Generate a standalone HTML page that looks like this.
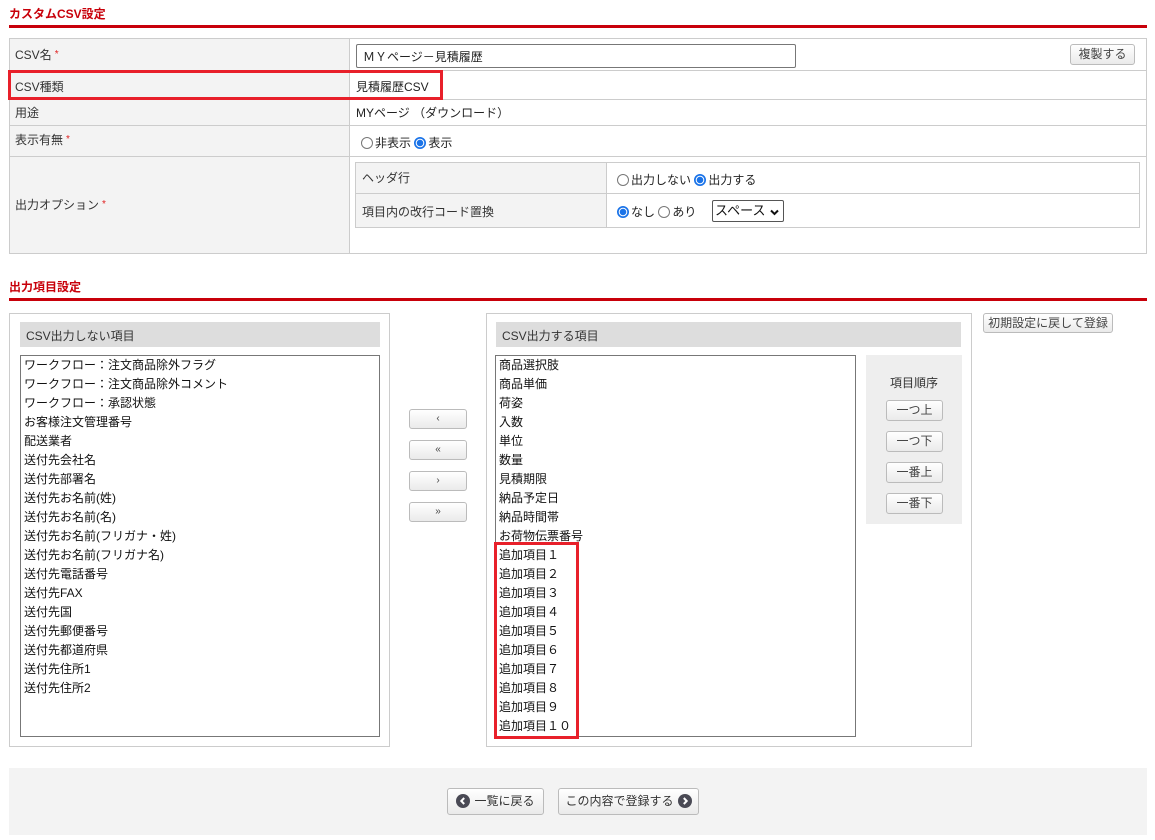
<!DOCTYPE html>
<html><head><meta charset="utf-8">
<style>
*{box-sizing:border-box;margin:0;padding:0}
body{width:1155px;height:840px;background:#fff;font-family:"Liberation Sans","Noto Sans CJK JP",sans-serif;font-size:12px;color:#333;position:relative;overflow:hidden}
.a{position:absolute}
.t{color:#c8000a;font-weight:bold;font-size:12px}
.rl{height:3px;background:#c8000a;left:9px;width:1138px}
.b{border:1px solid #ccc}
.btn{position:absolute;border:1px solid #bbb;border-radius:3px;background:linear-gradient(#fff,#eaeaea);font-size:12px;color:#444;text-align:center}
.rad{display:inline-block;width:12px;height:12px;border:1px solid #777;border-radius:50%;vertical-align:-2px;margin-right:2px;background:#fff}
.rad.on{border:1px solid #1a73e8;background:radial-gradient(circle,#1a73e8 0 3px,#fff 3.5px 4px,#1a73e8 4.5px)}
.req{color:#e02020;font-size:10px;vertical-align:2px;margin-left:3px}
.list div{height:19px;line-height:18px;padding-left:3px;color:#111;font-size:12px}
</style></head><body>
<div class="a t" style="left:9px;top:5px">カスタムCSV設定</div>
<div class="a rl" style="top:25px"></div>

<div class="a b" style="left:9px;top:38px;width:1138px;height:216px;background:#fff"></div>
<div class="a" style="left:10px;top:39px;width:340px;height:214px;background:#f3f3f3;border-right:1px solid #ccc"></div>
<div class="a" style="left:10px;top:70px;width:1136px;height:1px;background:#ccc"></div>
<div class="a" style="left:10px;top:99px;width:1136px;height:1px;background:#ccc"></div>
<div class="a" style="left:10px;top:125px;width:1136px;height:1px;background:#ccc"></div>
<div class="a" style="left:10px;top:156px;width:1136px;height:1px;background:#ccc"></div>

<div class="a" style="left:15px;top:46px">CSV名<span class="req">*</span></div>
<div class="a" style="left:15px;top:78px">CSV種類</div>
<div class="a" style="left:15px;top:104px">用途</div>
<div class="a" style="left:15px;top:131px">表示有無<span class="req">*</span></div>
<div class="a" style="left:15px;top:196px">出力オプション<span class="req">*</span></div>

<div class="a" style="left:356px;top:44px;width:440px;height:24px;border:1px solid #777;border-radius:2px;padding:3px 6px;color:#222">ＭＹページ－見積履歴</div>
<div class="btn" style="left:1070px;top:44px;width:65px;height:21px;line-height:19px">複製する</div>
<div class="a" style="left:356px;top:78px;color:#222">見積履歴CSV</div>
<div class="a" style="left:356px;top:104px;color:#222">MYページ （ダウンロード）</div>
<div class="a" style="left:361px;top:134px;color:#222"><span class="rad"></span>非表示 <span class="rad on"></span>表示</div>

<div class="a b" style="left:355px;top:162px;width:785px;height:66px"></div>
<div class="a" style="left:356px;top:163px;width:251px;height:64px;background:#f3f3f3;border-right:1px solid #ccc"></div>
<div class="a" style="left:356px;top:193px;width:783px;height:1px;background:#ccc"></div>
<div class="a" style="left:362px;top:169px;color:#333">ヘッダ行</div>
<div class="a" style="left:362px;top:203px;color:#333">項目内の改行コード置換</div>
<div class="a" style="left:617px;top:171px;color:#222"><span class="rad"></span>出力しない <span class="rad on"></span>出力する</div>
<div class="a" style="left:617px;top:203px;color:#222"><span class="rad on"></span>なし <span class="rad"></span>あり</div>
<div class="a" style="left:712px;top:200px;width:72px;height:22px;border:1px solid #555;border-radius:2px;padding:0 2px;font-size:13px;line-height:20px;color:#111">スペース<svg width="9" height="7" viewBox="0 0 9 7" style="position:absolute;right:4px;top:8px"><path d="M1 1.5 L4.5 5 L8 1.5" stroke="#111" stroke-width="2" fill="none"/></svg></div>

<div class="a" style="left:8px;top:70px;width:435px;height:30px;border:3px solid #e8202a"></div>

<div class="a t" style="left:9px;top:278px">出力項目設定</div>
<div class="a rl" style="top:298px"></div>

<div class="a b" style="left:9px;top:313px;width:381px;height:434px"></div>
<div class="a" style="left:20px;top:322px;width:360px;height:25px;background:#ddd;padding:5px 6px;color:#333">CSV出力しない項目</div>
<div class="a list" style="left:20px;top:355px;width:360px;height:382px;border:1px solid #777">
<div>ワークフロー：注文商品除外フラグ</div><div>ワークフロー：注文商品除外コメント</div><div>ワークフロー：承認状態</div><div>お客様注文管理番号</div><div>配送業者</div><div>送付先会社名</div><div>送付先部署名</div><div>送付先お名前(姓)</div><div>送付先お名前(名)</div><div>送付先お名前(フリガナ・姓)</div><div>送付先お名前(フリガナ名)</div><div>送付先電話番号</div><div>送付先FAX</div><div>送付先国</div><div>送付先郵便番号</div><div>送付先都道府県</div><div>送付先住所1</div><div>送付先住所2</div>
</div>

<div class="btn" style="left:409px;top:409px;width:58px;height:20px;line-height:18px;font-size:10px">‹</div>
<div class="btn" style="left:409px;top:440px;width:58px;height:20px;line-height:18px;font-size:10px">«</div>
<div class="btn" style="left:409px;top:471px;width:58px;height:20px;line-height:18px;font-size:10px">›</div>
<div class="btn" style="left:409px;top:502px;width:58px;height:20px;line-height:18px;font-size:10px">»</div>

<div class="a b" style="left:486px;top:313px;width:486px;height:434px"></div>
<div class="a" style="left:496px;top:322px;width:465px;height:25px;background:#ddd;padding:5px 6px;color:#333">CSV出力する項目</div>
<div class="a list" style="left:495px;top:355px;width:361px;height:382px;border:1px solid #777">
<div>商品選択肢</div><div>商品単価</div><div>荷姿</div><div>入数</div><div>単位</div><div>数量</div><div>見積期限</div><div>納品予定日</div><div>納品時間帯</div><div>お荷物伝票番号</div><div>追加項目１</div><div>追加項目２</div><div>追加項目３</div><div>追加項目４</div><div>追加項目５</div><div>追加項目６</div><div>追加項目７</div><div>追加項目８</div><div>追加項目９</div><div>追加項目１０</div>
</div>
<div class="a" style="left:494px;top:542px;width:85px;height:197px;border:3px solid #e8202a"></div>

<div class="a" style="left:866px;top:355px;width:96px;height:169px;background:#eee"></div>
<div class="a" style="left:866px;top:374px;width:96px;text-align:center;color:#333">項目順序</div>
<div class="btn" style="left:886px;top:400px;width:57px;height:21px;line-height:19px">一つ上</div>
<div class="btn" style="left:886px;top:431px;width:57px;height:21px;line-height:19px">一つ下</div>
<div class="btn" style="left:886px;top:462px;width:57px;height:21px;line-height:19px">一番上</div>
<div class="btn" style="left:886px;top:493px;width:57px;height:21px;line-height:19px">一番下</div>

<div class="btn" style="left:983px;top:313px;width:130px;height:20px;line-height:18px">初期設定に戻して登録</div>

<div class="a" style="left:9px;top:768px;width:1138px;height:67px;background:#f3f3f3"></div>
<div class="btn" style="left:447px;top:788px;width:97px;height:27px;line-height:25px;color:#333"><svg width="14" height="14" viewBox="0 0 14 14" style="vertical-align:-3px;margin-right:4px"><circle cx="7" cy="7" r="7" fill="#4a4a55"/><path d="M8.2 4 L5.3 7 L8.2 10" stroke="#fff" stroke-width="2" fill="none"/></svg>一覧に戻る</div>
<div class="btn" style="left:558px;top:788px;width:141px;height:27px;line-height:25px;color:#333">この内容で登録する<svg width="14" height="14" viewBox="0 0 14 14" style="vertical-align:-3px;margin-left:4px"><circle cx="7" cy="7" r="7" fill="#4a4a55"/><path d="M5.8 4 L8.7 7 L5.8 10" stroke="#fff" stroke-width="2" fill="none"/></svg></div>
</body></html>
